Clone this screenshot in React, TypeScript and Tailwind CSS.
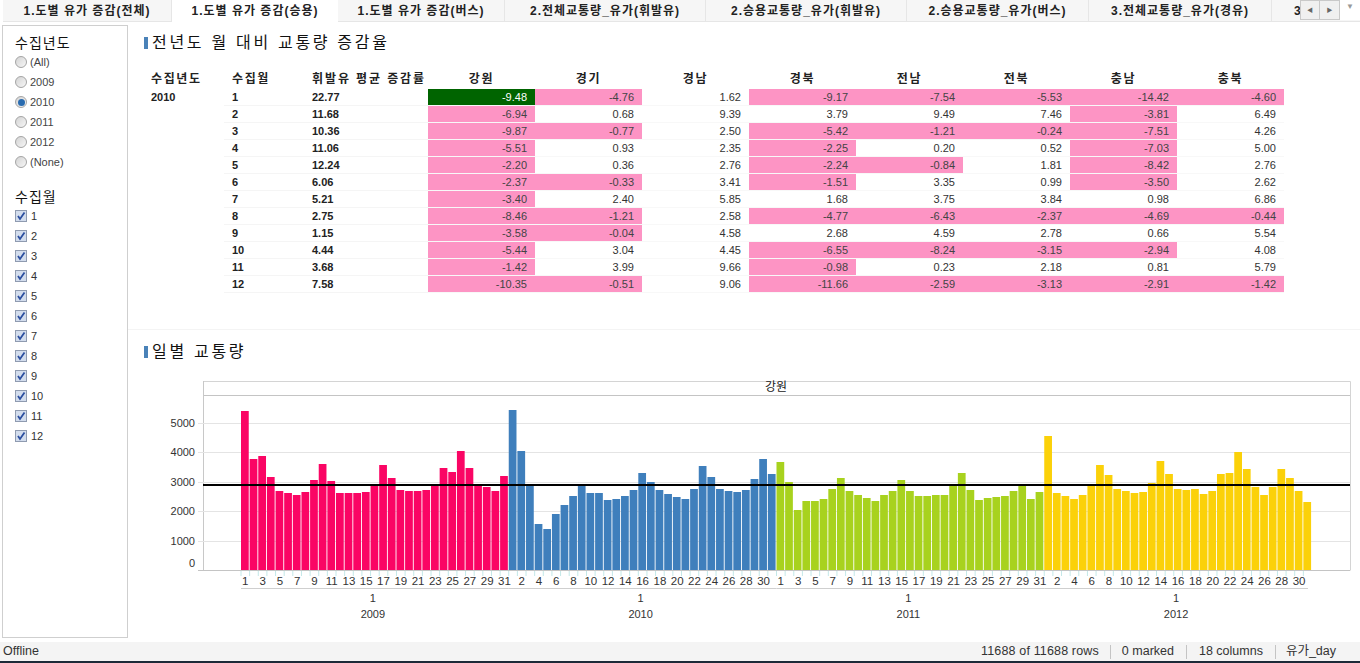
import React from 'react';

const tabs = [
  { label: '1.도별 유가 증감(전체)', w: 'w-[169px]' },
  { label: '1.도별 유가 증감(승용)', w: 'w-[166px]', active: true },
  { label: '1.도별 유가 증감(버스)', w: 'w-[167px]' },
  { label: '2.전체교통량_유가(휘발유)', w: 'w-[201px]' },
  { label: '2.승용교통량_유가(휘발유)', w: 'w-[201px]' },
  { label: '2.승용교통량_유가(버스)', w: 'w-[182px]' },
  { label: '3.전체교통량_유가(경유)', w: 'w-[183px]' },
];

const years = ['(All)', '2009', '2010', '2011', '2012', '(None)'];
const months = Array.from({ length: 12 }, (_, i) => i + 1);

const regions = ['강원', '경기', '경남', '경북', '전남', '전북', '충남', '충북'];
const gasoline = ['22.77', '11.68', '10.36', '11.06', '12.24', '6.06', '5.21', '2.75', '1.15', '4.44', '3.68', '7.58'];
const rows = [
  ['-9.48', '-4.76', '1.62', '-9.17', '-7.54', '-5.53', '-14.42', '-4.60'],
  ['-6.94', '0.68', '9.39', '3.79', '9.49', '7.46', '-3.81', '6.49'],
  ['-9.87', '-0.77', '2.50', '-5.42', '-1.21', '-0.24', '-7.51', '4.26'],
  ['-5.51', '0.93', '2.35', '-2.25', '0.20', '0.52', '-7.03', '5.00'],
  ['-2.20', '0.36', '2.76', '-2.24', '-0.84', '1.81', '-8.42', '2.76'],
  ['-2.37', '-0.33', '3.41', '-1.51', '3.35', '0.99', '-3.50', '2.62'],
  ['-3.40', '2.40', '5.85', '1.68', '3.75', '3.84', '0.98', '6.86'],
  ['-8.46', '-1.21', '2.58', '-4.77', '-6.43', '-2.37', '-4.69', '-0.44'],
  ['-3.58', '-0.04', '4.58', '2.68', '4.59', '2.78', '0.66', '5.54'],
  ['-5.44', '3.04', '4.45', '-6.55', '-8.24', '-3.15', '-2.94', '4.08'],
  ['-1.42', '3.99', '9.66', '-0.98', '0.23', '2.18', '0.81', '5.79'],
  ['-10.35', '-0.51', '9.06', '-11.66', '-2.59', '-3.13', '-2.91', '-1.42'],
];

// top y of every bar, read off the reference
const series = [
  {
    year: '2009',
    color: '#fa0564',
    tops: [411, 459, 456, 477, 491, 493, 495, 492, 480, 464, 481, 493, 493, 493, 492, 486, 465, 478, 490, 491, 491, 490, 486, 468, 472, 451, 468, 485, 487, 491, 476],
  },
  {
    year: '2010',
    color: '#3f7fbc',
    tops: [410, 451, 485, 524, 529, 514, 505, 496, 485, 493, 493, 500, 499, 496, 490, 473, 482, 490, 494, 497, 499, 489, 466, 477, 489, 491, 492, 490, 479, 459, 474],
  },
  {
    year: '2011',
    color: '#a8d21e',
    tops: [462, 482, 510, 501, 501, 499, 489, 478, 491, 495, 498, 501, 495, 491, 480, 491, 496, 496, 495, 495, 485, 473, 490, 500, 498, 497, 496, 491, 485, 499, 492],
  },
  {
    year: '2012',
    color: '#fbd109',
    tops: [436, 493, 496, 499, 495, 485, 465, 475, 489, 491, 493, 492, 483, 461, 474, 489, 490, 489, 494, 491, 474, 473, 452, 469, 487, 495, 487, 469, 478, 491, 502],
  },
];

const BAR_X = 241;
const PITCH = 8.637;
const BASE = 570;
const yAxis = [
  { v: '5000', y: 423 },
  { v: '4000', y: 452 },
  { v: '3000', y: 482 },
  { v: '2000', y: 511 },
  { v: '1000', y: 541 },
];

const SectionTitle = ({ text }: { text: string }) => (
  <div className="ml-px flex items-center gap-1 text-[16px] leading-5 tracking-[2.7px] text-[#111]">
    <span className="h-3 w-1 bg-[#4a82b8]" />
    <span>{text}</span>
  </div>
);

const Radio = ({ checked }: { checked: boolean }) => (
  <span className="flex h-3 w-3 items-center justify-center rounded-full border border-[#a4a4a4] bg-gradient-to-br from-[#d4d4d4] to-[#f6f6f6]">
    {checked && <span className="h-[7px] w-[7px] rounded-full bg-[#2a6cb0]" />}
  </span>
);

const CheckBox = () => (
  <span className="flex h-3 w-3 items-center justify-center border border-[#8f9bb0] bg-[#d3dded]">
    <svg width="10" height="10" viewBox="0 0 10 10">
      <path d="M2 5 L4 8 L8.5 1.5" fill="none" stroke="#2b4fa0" strokeWidth="1.8" />
    </svg>
  </span>
);

const Sidebar = () => (
  <aside className="ml-[2px] mt-[3px] h-[613px] w-[126px] shrink-0 border border-[#cfcfcf] px-3 pt-[9px]">
    <h3 className="text-[14px] leading-4 tracking-[1px] text-[#111]">수집년도</h3>
    <ul className="mt-px flex flex-col">
      {years.map((y) => (
        <li key={y} className="flex h-5 items-center gap-[3px] text-[11px] text-[#444]">
          <Radio checked={y === '2010'} />
          {y}
        </li>
      ))}
    </ul>
    <h3 className="mt-[17px] text-[14px] leading-4 tracking-[1px] text-[#111]">수집월</h3>
    <ul className="mt-px flex flex-col">
      {months.map((m) => (
        <li key={m} className="flex h-5 items-center gap-[4px] text-[11px] text-[#333]">
          <CheckBox />
          {m}
        </li>
      ))}
    </ul>
  </aside>
);

const DataTable = () => (
  <div className="mt-[15px] grid w-[1141px] grid-cols-[81px_80px_124px_repeat(8,107px)] text-[11px] text-[#333]">
    <div className="flex h-[21px] items-center pl-2 text-[12px] font-bold tracking-[1.6px] text-[#222]">수집년도</div>
    <div className="flex h-[21px] items-center pl-2 text-[12px] font-bold tracking-[1.6px] text-[#222]">수집월</div>
    <div className="flex h-[21px] items-center whitespace-nowrap pl-2 text-[12px] font-bold tracking-[1.9px] text-[#222]">휘발유 평균 증감률</div>
    {regions.map((r) => (
      <div key={r} className="flex h-[21px] items-center justify-center text-[12px] font-bold tracking-[1.6px] text-[#222]">
        {r}
      </div>
    ))}
    {rows.map((row, i) => (
      <React.Fragment key={i}>
        <div className="flex h-[17px] items-center pl-2 font-bold text-[#222]">{i === 0 ? '2010' : ''}</div>
        <div className="flex h-[17px] items-center border-b border-[#f5f5f5] pl-2 font-bold text-[#222]">{i + 1}</div>
        <div className="flex h-[17px] items-center border-b border-[#f5f5f5] pl-2 font-bold text-[#222]">{gasoline[i]}</div>
        {row.map((v, c) => {
          const neg = v.startsWith('-');
          const first = i === 0 && c === 0;
          return (
            <div key={c} className="h-[17px] border-b border-[#f8f8f8]">
              <div
                className={`flex h-4 items-center justify-end pr-2 ${
                  first ? 'bg-[#006400] text-white' : neg ? 'bg-[#fd94c4] text-[#444]' : 'text-[#333]'
                }`}
              >
                {v}
              </div>
            </div>
          );
        })}
      </React.Fragment>
    ))}
  </div>
);

const Chart = () => {
  const right = 1350;
  return (
    <svg width="1232" height="262" viewBox="128 376 1232 262" className="mt-[14px] block">
      {/* frame */}
      <path d="M203.5 381.5H1350.5V570.5" fill="none" stroke="#d4d4d4" />
      <line x1="203" x2={right} y1="395.5" y2="395.5" stroke="#c4c4c4" />
      <line x1="203.5" x2="203.5" y1="381" y2="570" stroke="#c8c8c8" />
      <text x="776" y="391" textAnchor="middle" fontSize="12" fill="#222">
        강원
      </text>
      {yAxis.map((t) => (
        <g key={t.v}>
          <line x1="198" x2={right} y1={t.y + 0.5} y2={t.y + 0.5} stroke="#e4e4e4" />
          <text x="195" y={t.y + 4} textAnchor="end" fontSize="11" fill="#333">
            {t.v}
          </text>
        </g>
      ))}
      <text x="195" y="567" textAnchor="end" fontSize="11" fill="#333">
        0
      </text>

      {/* bars */}
      {series.map((s, si) =>
        s.tops.map((top, d) => {
          const x = BAR_X + (si * 31 + d) * PITCH;
          return <rect key={`${si}-${d}`} x={x} y={top} width={PITCH - 0.9} height={BASE - top} fill={s.color} />;
        })
      )}
      <line x1="198" x2={right} y1="570.5" y2="570.5" stroke="#c4c4c4" />
      <line x1="203" x2={right} y1="485" y2="485" stroke="#000" strokeWidth="2" />

      {/* axis labels */}
      {series.map((s, si) => {
        const start = BAR_X + si * 31 * PITCH;
        const center = start + (31 * PITCH) / 2 - 2;
        return (
          <g key={s.year}>
            {s.tops.map((_, d) => {
              const x = start + d * PITCH;
              const day = d + 1;
              const odd = si % 2 === 0;
              return (
                <g key={d}>
                  <line x1={x} x2={x} y1="571" y2="576" stroke="#c4e8e8" />
                  {(odd ? day % 2 === 1 : day % 2 === 0) && (
                    <text x={x + PITCH / 2} y="585" textAnchor="middle" fontSize="11.5" fill="#333">
                      {day}
                    </text>
                  )}
                </g>
              );
            })}
            <line x1={start} x2={Math.min(start + 31 * PITCH, 1308)} y1="588.5" y2="588.5" stroke="#cfcfcf" />
            <text x={center} y="602" textAnchor="middle" fontSize="11" fill="#333">
              1
            </text>
            <text x={center} y="618" textAnchor="middle" fontSize="11" fill="#333">
              {s.year}
            </text>
          </g>
        );
      })}
    </svg>
  );
};

export default function App() {
  return (
    <div className="flex h-[663px] w-[1360px] flex-col overflow-hidden bg-white [font-family:'Liberation_Sans','Noto_Sans_CJK_KR',sans-serif]">
      {/* tab strip */}
      <div className="relative flex h-[22px] shrink-0 overflow-hidden pl-[3px]">
        {tabs.map((t) => (
          <div
            key={t.label}
            className={`${t.w} flex shrink-0 items-center justify-center whitespace-nowrap text-[12px] font-bold tracking-[1px] text-[#222] ${
              t.active ? 'bg-white' : 'border-b border-r border-[#e6e6e6] bg-[#f6f6f6]'
            }`}
          >
            {t.label}
          </div>
        ))}
        <div className="flex w-[120px] shrink-0 items-center border-b border-[#e6e6e6] bg-[#f6f6f6] pl-[22px] text-[12px] font-bold text-[#222]">
          3
        </div>
        <div className="absolute right-0 top-0 flex h-[20px] w-[60px] items-start bg-white">
          <span className="flex h-[20px] w-[20px] items-center justify-center border border-[#c9c9c9] bg-[#f0f0f0] text-[6px] text-[#666]">◀</span>
          <span className="flex h-[20px] w-[20px] items-center justify-center border border-l-0 border-[#c9c9c9] bg-[#f0f0f0] text-[6px] text-[#666]">▶</span>
          <span className="flex h-[14px] w-[20px] items-center justify-center text-[8px] text-[#999]">▼</span>
        </div>
      </div>

      <div className="flex min-h-0 flex-1">
        <Sidebar />
        <main className="min-w-0 flex-1">
          <div className="h-[308px] border-b border-[#f4f4f4] pl-[15px] pt-[11px]">
            <SectionTitle text="전년도 월 대비 교통량 증감율" />
            <DataTable />
          </div>
          <div className="pl-[15px] pt-[12px]">
            <SectionTitle text="일별 교통량" />
          </div>
          <Chart />
        </main>
      </div>

      {/* status bar */}
      <footer className="flex h-[19px] shrink-0 items-center justify-between bg-[#f4f4f4] pl-[3px] text-[12.5px] text-[#333]">
        <span>Offline</span>
        <div className="flex items-center pr-[24px]">
          <span className="tracking-[0.15px]">11688 of 11688 rows</span>
          <span className="mx-[11px] h-[14px] w-px bg-[#c4c4c4]" />
          <span>0 marked</span>
          <span className="mx-[12px] h-[14px] w-px bg-[#c4c4c4]" />
          <span>18 columns</span>
          <span className="ml-[12px] mr-[10px] h-[14px] w-px bg-[#c4c4c4]" />
          <span>유가_day</span>
        </div>
      </footer>
      <div className="h-[2px] shrink-0 bg-[#1c2a38]" />
    </div>
  );
}
